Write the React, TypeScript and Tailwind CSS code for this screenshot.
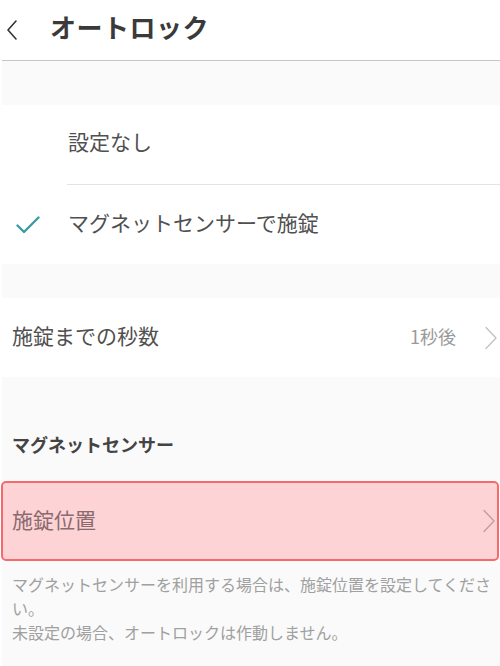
import React from "react";

const Chevron = ({ className = "" }: { className?: string }) => (
  <svg width="12" height="24" viewBox="0 0 12 24" className={className} fill="none">
    <path d="M1 1.5 L11 12 L1 22.5" stroke="currentColor" strokeWidth="1.3" strokeLinecap="round" strokeLinejoin="round" />
  </svg>
);

export default function App() {
  return (
    <div
      className="w-[500px] h-[666px] bg-white overflow-hidden"
      style={{ fontFamily: '"Noto Sans CJK JP", "Noto Sans", sans-serif' }}
    >
      <header className="h-[60px] flex items-center bg-white">
        <svg width="14" height="22" viewBox="0 0 14 22" className="ml-[5px] text-[#333]" fill="none">
          <path d="M11 2 L3 11 L11 20" stroke="currentColor" strokeWidth="1.6" strokeLinecap="round" strokeLinejoin="round" />
        </svg>
        <h1 className="ml-[31px] text-[26px] font-bold text-[#3a3a3a] tracking-[0.5px] leading-none pb-[6px]">
          オートロック
        </h1>
      </header>
      <div className="pl-[2px]">
        <div className="h-px bg-[#c6c6c6]" />
        <div className="bg-[#fafafa] h-[44px]" />
        <div className="bg-white">
          <div className="h-[79px] flex items-center pl-[66px] pb-[5px] text-[21px] text-[#505050]">設定なし</div>
          <div className="ml-[65px] h-px bg-[#e3e3e3]" />
          <div className="h-[79px] flex items-center pb-[4px] text-[21px] text-[#505050]">
            <svg width="24" height="18" viewBox="0 0 24 18" className="ml-[14px] mr-[28px] mt-[4px]" fill="none">
              <path d="M1.5 9.5 L8 16 L22.5 1.5" stroke="#3d9aa5" strokeWidth="2.4" strokeLinecap="round" strokeLinejoin="round" />
            </svg>
            マグネットセンサーで施錠
          </div>
        </div>
        <div className="bg-[#fafafa] h-[34px]" />
        <div className="bg-white h-[79px] flex items-center pl-[10px] pr-[3px]">
          <span className="text-[21px] text-[#505050] pb-[4px]">施錠までの秒数</span>
          <span className="ml-auto text-[18px] text-[#9a9a9a] pb-[2px]">1秒後</span>
          <Chevron className="ml-[29px] text-[#c0c0c8]" />
        </div>
        <div className="bg-[#fafafa] h-[104px] flex items-end pl-[10px] pb-[28px]">
          <span className="text-[18px] font-bold text-[#444] leading-none">マグネットセンサー</span>
        </div>
        <div className="relative -ml-[1px] mr-[1px]">
          <div className="h-[80px] flex items-center pl-[9px] pr-[2px] bg-[#fdd3d5] border-2 border-[#f56b6b] rounded-[5px]">
            <span className="text-[21px] text-[#8a6a6e] pb-[3px]">施錠位置</span>
            <Chevron className="ml-auto text-[#c29aa2]" />
          </div>
        </div>
        <div className="bg-[#fafafa] h-[105px] pl-[10px] pr-[4px] pt-[11px] text-[16px] leading-[24px] text-[#a0a0a0]">
          <p>マグネットセンサーを利用する場合は、施錠位置を設定してください。</p>
          <p>未設定の場合、オートロックは作動しません。</p>
        </div>
      </div>
    </div>
  );
}
